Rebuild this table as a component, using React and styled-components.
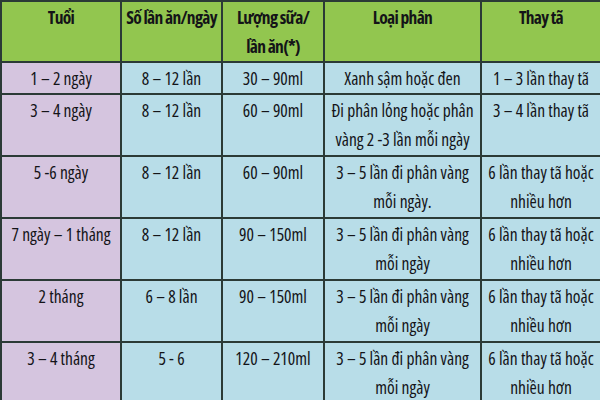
import React from 'react';
import styled, { createGlobalStyle } from 'styled-components';

const GlobalStyle = createGlobalStyle`
  html, body {
    margin: 0;
    padding: 0;
    background: #141414;
  }
  body {
    width: 600px;
    height: 400px;
    overflow: hidden;
    font-family: "Open Sans", "Liberation Sans", sans-serif;
    font-stretch: 75%;
    font-variation-settings: "wdth" 75;
  }
`;

const Table = styled.table`
  width: 600px;
  border-collapse: collapse;
  table-layout: fixed;
  color: #141418;
  font-size: 17.5px;
`;

const HeadCell = styled.th`
  background: #92c64f;
  font-weight: 700;
  letter-spacing: -0.7px;
  white-space: nowrap;
  height: 58px;
  padding: 1px 0 0;
  line-height: 29px;
  vertical-align: top;
  text-align: center;
  border: 2px solid #2b3a36;
`;

const Cell = styled.td`
  background: ${p => (p.$tone === 'purple' ? '#d5c5df' : '#b8dde8')};
  font-weight: 500;
  height: ${p => p.$h}px;
  padding: 1px 1px 0;
  line-height: 29px;
  vertical-align: top;
  text-align: center;
  border: 2px solid #2b3a36;
  border-top-width: ${p => (p.$first ? 2 : 1)}px;
`;

const widths = [120, 101, 102, 157, 120];
const heads = [
  ['Tuổi'],
  ['Số lần ăn/ngày'],
  ['Lượng sữa/', 'lần ăn(*)'],
  ['Loại phân'],
  ['Thay tã'],
];

const rows = [
  { h: 29, cells: ['1 – 2 ngày', '8 – 12 lần', '30 – 90ml', 'Xanh sậm hoặc đen', '1 – 3 lần thay tã'] },
  { h: 59, cells: ['3 – 4 ngày', '8 – 12 lần', '60 – 90ml', 'Đi phân lỏng hoặc phân vàng 2 -3 lần mỗi ngày', '3 – 4 lần thay tã'] },
  { h: 59, cells: ['5 -6 ngày', '8 – 12 lần', '60 – 90ml', '3 – 5 lần đi phân vàng mỗi ngày.', '6 lần thay tã hoặc nhiều hơn'] },
  { h: 59, cells: ['7 ngày – 1 tháng', '8 – 12 lần', '90 – 150ml', '3 – 5 lần đi phân vàng mỗi ngày', '6 lần thay tã hoặc nhiều hơn'] },
  { h: 59, cells: ['2 tháng', '6 – 8 lần', '90 – 150ml', '3 – 5 lần đi phân vàng mỗi ngày', '6 lần thay tã hoặc nhiều hơn'] },
  { h: 53, cells: ['3 – 4 tháng', '5 - 6', '120 – 210ml', '3 – 5 lần đi phân vàng mỗi ngày', '6 lần thay tã hoặc nhiều hơn'] },
];

export default function App() {
  return (
    <>
      <GlobalStyle />
      <Table>
        <colgroup>
          {widths.map((w, i) => <col key={i} style={{ width: w }} />)}
        </colgroup>
        <thead>
          <tr>
            {heads.map(lines => (
              <HeadCell key={lines[0]}>
                {lines.map((l, i) => (
                  <React.Fragment key={l}>
                    {i > 0 && <br />}
                    {l}
                  </React.Fragment>
                ))}
              </HeadCell>
            ))}
          </tr>
        </thead>
        <tbody>
          {rows.map((r, ri) => (
            <tr key={ri}>
              {r.cells.map((c, ci) => (
                <Cell key={ci} $h={r.h} $tone={ci === 0 ? 'purple' : 'blue'} $first={ri === 0}>
                  {c}
                </Cell>
              ))}
            </tr>
          ))}
        </tbody>
      </Table>
    </>
  );
}
